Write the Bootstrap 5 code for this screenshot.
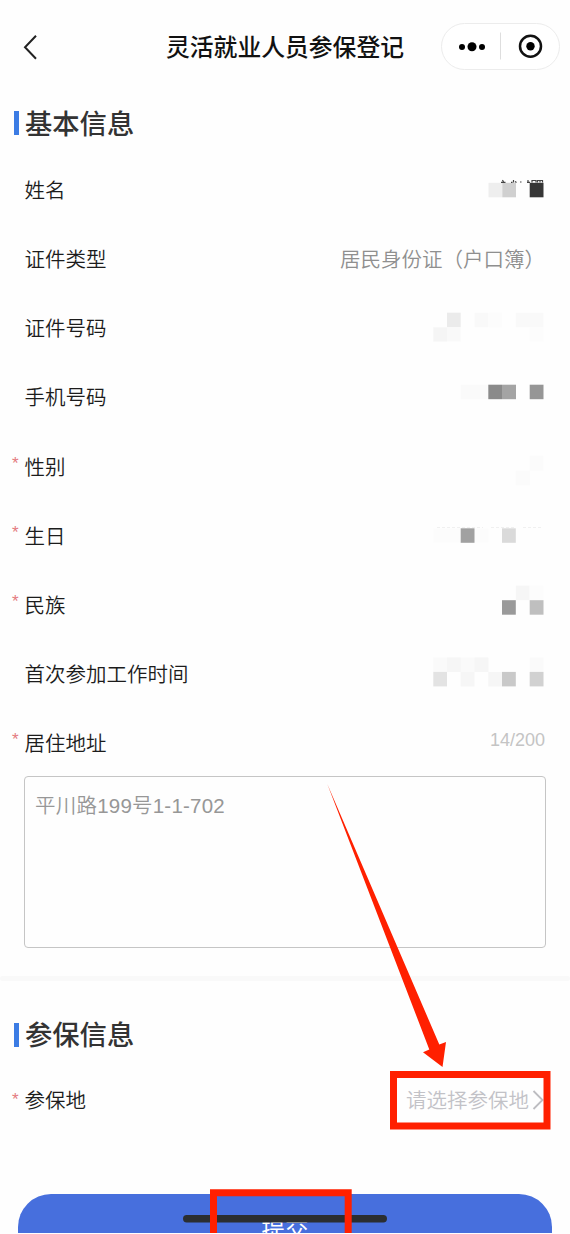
<!DOCTYPE html>
<html lang="zh-CN">
<head>
<meta charset="utf-8">
<meta name="viewport" content="width=device-width, initial-scale=1">
<title>灵活就业人员参保登记</title>
<link href="https://cdn.jsdelivr.net/npm/bootstrap@5.3.0/dist/css/bootstrap.min.css" rel="stylesheet">
<style>
body{font-family:"Liberation Sans","Noto Sans CJK SC",sans-serif;background:#fefefe;color:#1c1c1c;height:1234px;overflow:hidden}
.screen{width:570px;height:1233px}
.topbar{height:93px;padding:0 10px 0 23px}
.page-title{font-size:23.8px;font-weight:500;color:#111;line-height:1;left:0;right:0;top:36px}
.capsule{width:119px;height:47px;border:1px solid #ececec;border-radius:24px;background:#fff}
.sect{height:62.4px;padding-left:14px}
.sect h2{font-size:27.3px;font-weight:500;line-height:1;color:#333}
.tick{width:4.5px;height:24px;background:#3c7ce4;margin:-2px 6.500px 0 0}
.field{height:69.1px;padding:0 25px 0 24.5px;font-size:20.5px;line-height:1}
.field>span{padding-top:3px;font-weight:350}
.req::before{content:"*";position:absolute;left:-12.5px;top:0;font-size:17px;color:#e47b80}
.field>.val{color:#8f8f8f}
.field>.count{color:#c4c4c4;font-size:18px;padding:0 0 5px}
.addr{margin:-1px 24px 0;height:171.5px;border:1.6px solid #c5c5c5;border-radius:4px;padding:19px 10px;font-size:20.5px;line-height:1;color:#979797;font-weight:350;letter-spacing:.22px}
.gap-line{height:5px;background:#f9f9f9;margin-top:28px;margin-bottom:1px;border-radius:6px}
.field>.pick{color:#c2c2c7;padding-top:0}
.pick svg{margin:-3px 1px 0 3px}
.submit{margin:0 18px;height:39px;background:#476fdd;border-radius:33px 33px 0 0;color:#fff;font-size:23.5px;line-height:1}
</style>
</head>
<body>
<main class="screen position-relative overflow-hidden">
  <header class="topbar d-flex align-items-center justify-content-between position-relative">
    <svg width="15" height="26" viewBox="0 0 15 26" fill="none" stroke="#222" stroke-width="2"><path d="M13 1.7 2 13.3 13 24.8"/></svg>
    <h1 class="page-title position-absolute text-center mb-0">灵活就业人员参保登记</h1>
    <div class="capsule d-flex position-relative">
      <svg width="117" height="45" viewBox="0 0 117 45"><circle cx="20" cy="23" r="3"/><circle cx="30" cy="22.700" r="4.5"/><circle cx="40" cy="23" r="3"/><path d="M58.5 8.500v27" stroke="#dedede"/><circle cx="88.500" cy="22.300" r="10.500" fill="none" stroke="#111" stroke-width="2.500"/><circle cx="88.500" cy="22.300" r="4.200"/></svg>
    </div>
  </header>
  <section>
    <div class="sect d-flex align-items-center"><span class="tick"></span><h2 class="mb-0">基本信息</h2></div>
    <div class="field d-flex align-items-center justify-content-between"><span>姓名</span>
      <svg width="112" height="69" viewBox="0 0 112 69"><path fill="#eee" d="M55.500 27.800h13.800v14.500H55.500z"/><path fill="#d0d0d0" d="M69.300 27.800h13.700v14.500H69.300z"/><path fill="#363636" d="M96.700 27.800h13.800v14.500H96.700z"/><path fill="none" stroke="#444" stroke-width="1.200" d="M69.500 25l1 2M68 27.300h4.500M80.500 25v2.500M78 27.300h1.500M82 26.500l1.500 1M87 27h1.500M95 25v2.500M94 27.300h3M99 27.500v-2h4v2M104.500 27.500v-2h5v2M107 25.500v2"/></svg></div>
    <div class="field d-flex align-items-center justify-content-between"><span>证件类型</span><span class="val">居民身份证（户口簿）</span></div>
    <div class="field d-flex align-items-center justify-content-between"><span>证件号码</span>
      <svg width="112" height="69" viewBox="0 0 112 69"><path fill="#ebebeb" d="M14 18.700h13.700v14.600H14z"/><path fill="#f9f9f9" d="M14 33.300h13.700v14.300H14zM41.500 18.700h13.800v14.600H41.500zM82.800 18.700h27.700v14.600H82.800z"/><path fill="#f5f5f5" d="M.3 33.300H14v14.300H.3z"/><path fill="#fcfcfc" d="M55.300 18.700H69v14.600H55.300zM96.700 33.300h13.800v14.300H96.700z"/></svg></div>
    <div class="field d-flex align-items-center justify-content-between"><span>手机号码</span>
      <svg width="112" height="69" viewBox="0 0 112 69"><path fill="#fafafa" d="M27.700 21.700h27.500v14.500H27.700z"/><path fill="#8a8a8a" d="M55.300 21.700H69v14.500H55.300z"/><path fill="#a4a4a4" d="M69 21.700h14v14.500H69z"/><path fill="#969696" d="M96.700 21.700h13.800v14.500H96.700z"/></svg></div>
    <div class="field d-flex align-items-center justify-content-between"><span class="req position-relative">性别</span>
      <svg width="112" height="69" viewBox="0 0 112 69"><path fill="#fbfbfb" d="M96.700 23.800h13.800v15H96.700zM82.800 38.800h14v14.500h-14z"/></svg></div>
    <div class="field d-flex align-items-center justify-content-between"><span class="req position-relative">生日</span>
      <svg width="112" height="69" viewBox="0 0 112 69"><path fill="#fcfcfc" d="M.3 27.300h55v14.500H.3z"/><path fill="#a1a1a1" d="M27.700 27.300h13.800v14.500H27.700z"/><path fill="#dadada" d="M69 27.300h13.800v14.500H69z"/><path fill="none" stroke="#f0f0f0" stroke-dasharray="3 2" d="M4 26.500h46M58 26.500h25M90 26.500h20"/></svg></div>
    <div class="field d-flex align-items-center justify-content-between"><span class="req position-relative">民族</span>
      <svg width="112" height="69" viewBox="0 0 112 69"><path fill="#f6f6f6" d="M82.800 15.700h13.900v14.500H82.800z"/><path fill="#fcfcfc" d="M96.700 15.700h13.800v14.500H96.700z"/><path fill="#9a9a9a" d="M69 30.200h13.800v14.500H69z"/><path fill="#bfbfbf" d="M96.700 30.200h13.800v14.500H96.700z"/></svg></div>
    <div class="field d-flex align-items-center justify-content-between"><span>首次参加工作时间</span>
      <svg width="112" height="69" viewBox="0 0 112 69"><path fill="#fafafa" d="M.3 18.400h54.900v14.500H.3zM96.700 18.400h13.800v14.500H96.700z"/><path fill="#f6f6f6" d="M14 18.400h13.700v14.500H14zM41.500 18.400h13.800v14.500H41.500zM27.700 32.900h13.800v14.500H27.700zM55.300 32.900H69v14.500H55.300z"/><path fill="#e3e3e3" d="M.3 32.900H14v14.500H.3z"/><path fill="#c9c9c9" d="M69 32.900h13.800v14.500H69z"/><path fill="#d1d1d1" d="M96.700 32.900h13.800v14.500H96.700z"/></svg></div>
    <div class="field d-flex align-items-center justify-content-between"><span class="req position-relative">居住地址</span><span class="count">14/200</span></div>
    <div class="addr">平川路199号1-1-702</div>
  </section>
  <div class="gap-line"></div>
  <section>
    <div class="sect d-flex align-items-center mt-4"><span class="tick"></span><h2 class="mb-0">参保信息</h2></div>
    <div class="field d-flex align-items-center justify-content-between"><span class="req position-relative pt-0">参保地</span>
      <span class="pick d-flex align-items-center">请选择参保地<svg width="12" height="22" viewBox="0 0 12 22" fill="none" stroke="#bdbdc1" stroke-width="1.800"><path d="M1.500 2 10.500 11 1.500 20"/></svg></span></div>
  </section>
  <footer class="position-absolute bottom-0 start-0 end-0"><div class="submit d-flex justify-content-center overflow-hidden"><span style="padding-top:25px">提交</span></div></footer>
  <svg class="position-absolute top-0 start-0" width="570" height="1233" viewBox="0 0 570 1233">
    <rect x="183" y="1215" width="204" height="7.500" rx="3.700" fill="#2b2e31"/>
    <g fill="none" stroke="#ff2000" stroke-width="7"><path d="M393.500 1074.500h153.500v51.500H393.500z"/><path d="M213.500 1234v-41.300h134.700V1234"/></g>
    <path fill="#ff2000" d="M327.300 784 439.300 1044.500 446 1042 442.500 1067 423 1052.300 429.300 1049.500z"/>
  </svg>
</main>
<script src="https://cdn.jsdelivr.net/npm/bootstrap@5.3.0/dist/js/bootstrap.bundle.min.js"></script>
</body>
</html>
